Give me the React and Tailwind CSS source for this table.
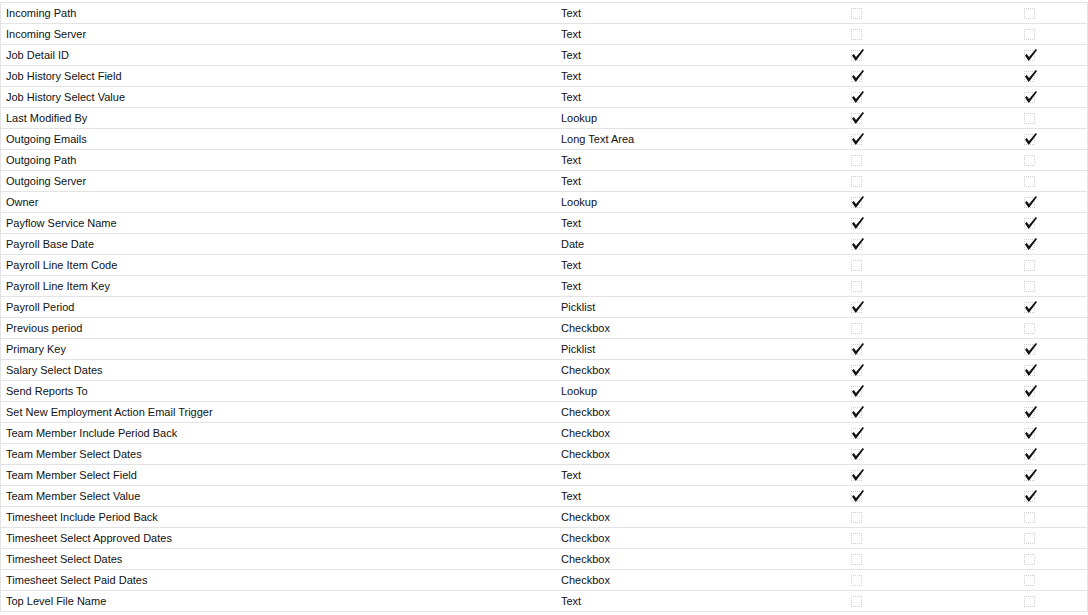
import React from 'react';

const rows = [
  ['Incoming Path', 'Text', false, false],
  ['Incoming Server', 'Text', false, false],
  ['Job Detail ID', 'Text', true, true],
  ['Job History Select Field', 'Text', true, true],
  ['Job History Select Value', 'Text', true, true],
  ['Last Modified By', 'Lookup', true, false],
  ['Outgoing Emails', 'Long Text Area', true, true],
  ['Outgoing Path', 'Text', false, false],
  ['Outgoing Server', 'Text', false, false],
  ['Owner', 'Lookup', true, true],
  ['Payflow Service Name', 'Text', true, true],
  ['Payroll Base Date', 'Date', true, true],
  ['Payroll Line Item Code', 'Text', false, false],
  ['Payroll Line Item Key', 'Text', false, false],
  ['Payroll Period', 'Picklist', true, true],
  ['Previous period', 'Checkbox', false, false],
  ['Primary Key', 'Picklist', true, true],
  ['Salary Select Dates', 'Checkbox', true, true],
  ['Send Reports To', 'Lookup', true, true],
  ['Set New Employment Action Email Trigger', 'Checkbox', true, true],
  ['Team Member Include Period Back', 'Checkbox', true, true],
  ['Team Member Select Dates', 'Checkbox', true, true],
  ['Team Member Select Field', 'Text', true, true],
  ['Team Member Select Value', 'Text', true, true],
  ['Timesheet Include Period Back', 'Checkbox', false, false],
  ['Timesheet Select Approved Dates', 'Checkbox', false, false],
  ['Timesheet Select Dates', 'Checkbox', false, false],
  ['Timesheet Select Paid Dates', 'Checkbox', false, false],
  ['Top Level File Name', 'Text', false, false],
];

const CheckImg = ({ checked }) => (
  <span className="relative inline-block w-[14px] h-[13px]">
    <span className="absolute left-0 top-[1px] w-[11px] h-[11px] border border-dotted border-[#cfcfcf]" />
    {checked && (
      <svg className="absolute left-0 top-[-1px]" width="14" height="14" viewBox="0 0 14 14">
        <path d="M1 7.5 L2.8 6 L5 9 L11.8 1 L13 2 L5.2 12.5 L4.3 12.5 Z" fill="#111" />
      </svg>
    )}
  </span>
);

export default function App() {
  return (
    <div className="w-[1088px] h-[615px] bg-white overflow-hidden pt-[2px] font-['Liberation_Sans',Arial,sans-serif] text-[11px] text-[#111]">
      <div className="border-l border-r border-t border-[#e3e3e3]">
        {rows.map(([name, type, a, b]) => (
          <div key={name} className="flex items-center h-[21px] border-b border-[#e3e3e3]">
            <div className="w-[554px] pl-[5px] whitespace-nowrap">{name}</div>
            <div className="w-[290px] pl-[6px] whitespace-nowrap">{type}</div>
            <div className="w-[173px] pl-[6px] flex items-center">
              <CheckImg checked={a} />
            </div>
            <div className="flex-1 pl-[6px] flex items-center">
              <CheckImg checked={b} />
            </div>
          </div>
        ))}
      </div>
    </div>
  );
}
